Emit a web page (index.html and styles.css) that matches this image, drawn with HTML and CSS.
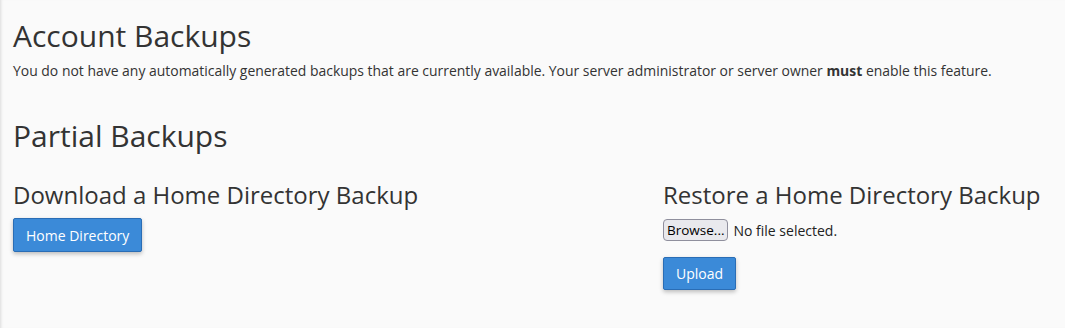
FILE: index.html
```html
<!DOCTYPE html>
<html>
<head>
    <title>Backup</title>
    <link rel="stylesheet" href="styles.css">
</head>
<body>
    <div class="page">
        <h1>Account Backups</h1>
        <p class="note">You do not have any automatically generated backups that are currently available. Your server administrator or server owner <strong>must</strong> enable this feature.</p>

        <h1 class="section-title">Partial Backups</h1>

        <div class="columns">
            <div class="col">
                <h2>Download a Home Directory Backup</h2>
                <button class="btn-primary">Home Directory</button>
            </div>
            <div class="col">
                <h2>Restore a Home Directory Backup</h2>
                <div class="file-row">
                    <button class="browse">Browse...</button>
                    <span class="file-name">No file selected.</span>
                </div>
                <button class="btn-primary upload">Upload</button>
            </div>
        </div>
    </div>
</body>
</html>
```

FILE: styles.css
```css
body {
    margin: 0;
    background: #fafafa;
    font-family: 'Open Sans', sans-serif;
    color: #333;
    box-shadow: inset 3px 0 3px -2px rgba(0,0,0,0.12);
    min-height: 100vh;
}

.page {
    padding: 18px 13px 0 13px;
}

h1 {
    font-size: 30px;
    font-weight: 400;
    line-height: 36px;
    margin: 0;
}

.note {
    font-size: 13.95px;
    line-height: 20px;
    margin: 7px 0 0 0;
}

.note strong {
    font-weight: 700;
}

.section-title {
    margin-top: 37px;
}

.columns {
    display: grid;
    grid-template-columns: 650px 1fr;
    margin-top: 26px;
}

h2 {
    font-size: 24px;
    font-weight: 400;
    line-height: 30px;
    margin: 0 0 8px 0;
}

.btn-primary {
    display: block;
    font-family: 'Open Sans', sans-serif;
    font-size: 14px;
    color: #fff;
    background: #3b8ad8;
    border: 1px solid #2a6db5;
    border-radius: 2px;
    padding: 0 12px;
    height: 34px;
    box-shadow: 0 2px 4px rgba(0,0,0,0.25);
}

.file-row {
    display: flex;
    align-items: center;
    gap: 5px;
    height: 24px;
}

.browse {
    font-family: 'Open Sans', sans-serif;
    font-size: 13.5px;
    color: #000;
    background: #e9e9ed;
    border: 1px solid #8f8f9d;
    border-radius: 4px;
    padding: 0 3px;
    height: 22px;
}

.file-name {
    font-size: 14px;
    color: #222;
}

.upload {
    margin-top: 15px;
    height: 33px;
}
```
